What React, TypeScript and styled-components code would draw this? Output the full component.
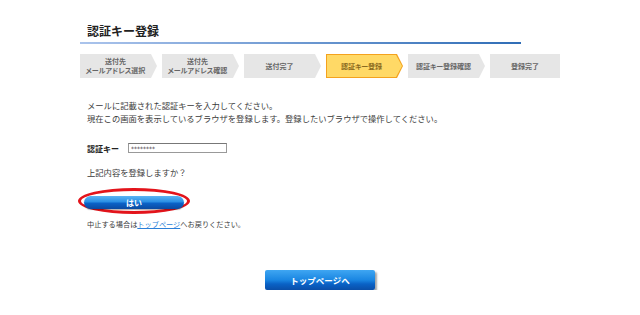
import React from "react";
import styled, { createGlobalStyle } from "styled-components";

const GlobalStyle = createGlobalStyle`
  html, body {
    margin: 0;
    padding: 0;
    background: #fff;
  }
  body {
    font-family: "Noto Sans CJK JP", "Noto Sans", sans-serif;
    color: #333;
  }
`;

const Page = styled.div`
  width: 480px;
  margin: 0 auto;
  padding-top: 23px;
`;

const Title = styled.h1`
  margin: 0;
  width: 434px;
  padding: 0 0 3px 7px;
  font-size: 12px;
  line-height: 16px;
  font-weight: bold;
  color: #222;
  border-bottom: 2px solid #3b78c0;
  border-image: linear-gradient(to right, #abc4ec, #2f6db6) 1;
`;

const Steps = styled.ol`
  display: flex;
  gap: 5px;
  margin: 10px 0 0;
  padding: 0;
  list-style: none;
`;

const arrow = `polygon(0 0, calc(100% - 6px) 0, 100% 50%, calc(100% - 6px) 100%, 0 100%)`;

const Step = styled.li<{ $active?: boolean; $last?: boolean }>`
  width: ${(p) => (p.$last ? 70 : 77)}px;
  height: 24px;
  padding: 1px;
  box-sizing: border-box;
  background: ${(p) => (p.$active ? "#f4a21e" : "#e6e6e6")};
  clip-path: ${(p) => (p.$last ? "none" : arrow)};
`;

const StepFace = styled.div<{ $active?: boolean; $last?: boolean }>`
  height: 100%;
  display: flex;
  flex-direction: column;
  align-items: center;
  justify-content: center;
  padding-right: ${(p) => (p.$last ? 0 : 6)}px;
  box-sizing: border-box;
  background: ${(p) => (p.$active ? "#ffd966" : "#e6e6e6")};
  clip-path: ${(p) => (p.$last ? "none" : arrow)};
  color: ${(p) => (p.$active ? "#8a6a20" : "#666")};
  font-size: 7px;
  line-height: 9px;
  font-weight: bold;
  font-feature-settings: "palt";
  text-align: center;
  white-space: nowrap;
`;

const Text = styled.p<{ $gap: number; $size?: number }>`
  margin: ${(p) => p.$gap}px 0 0;
  padding-left: 7px;
  font-size: ${(p) => p.$size ?? 8.3}px;
  line-height: 13px;
  color: #3a3a3a;
`;

const KeyRow = styled.div`
  display: flex;
  align-items: center;
  gap: 9px;
  margin-top: 17px;
  padding-left: 7px;
  height: 12px;
`;

const KeyLabel = styled.label`
  font-size: 8px;
  font-weight: bold;
  color: #222;
`;

const KeyInput = styled.input`
  width: 99px;
  height: 10px;
  box-sizing: border-box;
  padding: 0 2px;
  border: 1px solid #999;
  border-top-color: #777;
  font-size: 6px;
  line-height: 6px;
  font-family: "DejaVu Sans", sans-serif;
  color: #333;
  outline: none;
  vertical-align: top;
`;

const Circled = styled.div`
  margin: 9px 0 0 -2px;
  width: 112px;
  height: 26px;
  box-sizing: border-box;
  border: 3px solid #e3141b;
  border-radius: 50%;
  display: flex;
  align-items: center;
  justify-content: center;
`;

const blueFace = `
  background: linear-gradient(to bottom, #5bb4f4 0%, #2a8fe4 45%, #0b63c8 55%, #0a49a0 100%);
  color: #fff;
  font-family: "Noto Sans CJK JP", sans-serif;
  font-weight: bold;
  border: none;
  padding: 0;
  cursor: pointer;
`;

const YesButton = styled.button`
  ${blueFace}
  width: 100px;
  height: 13px;
  margin-top: 2px;
  border-radius: 7px;
  font-size: 8px;
  line-height: 13px;
  box-shadow: 0 1px 1px rgba(0, 0, 0, 0.3);
`;

const Link = styled.a`
  color: #2a7fd8;
  text-decoration: underline;
`;

const TopButton = styled.button`
  ${blueFace}
  display: block;
  width: 110px;
  height: 20px;
  margin: 39px auto 0;
  border-radius: 2px;
  font-size: 8.5px;
  box-shadow: 2px 2px 2px rgba(0, 0, 0, 0.35);
  background: linear-gradient(to bottom, #3fa6f2 0%, #1a86e2 50%, #0a62c6 70%, #0a4ea8 100%);
`;

const steps = [
  ["送付先", "メールアドレス選択"],
  ["送付先", "メールアドレス確認"],
  ["送付完了"],
  ["認証キー登録"],
  ["認証キー登録確認"],
  ["登録完了"],
];

export default function App() {
  return (
    <>
      <GlobalStyle />
      <Page>
        <Title>認証キー登録</Title>
        <Steps>
          {steps.map((lines, i) => (
            <Step key={i} $active={i === 3} $last={i === steps.length - 1}>
              <StepFace $active={i === 3} $last={i === steps.length - 1}>
                {lines.map((l) => (
                  <span key={l}>{l}</span>
                ))}
              </StepFace>
            </Step>
          ))}
        </Steps>
        <Text $gap={21}>
          メールに記載された認証キーを入力してください。
          <br />
          現在この画面を表示しているブラウザを登録します。登録したいブラウザで操作してください。
        </Text>
        <KeyRow>
          <KeyLabel htmlFor="key">認証キー</KeyLabel>
          <KeyInput id="key" type="text" readOnly value="********" />
        </KeyRow>
        <Text $gap={12}>上記内容を登録しますか？</Text>
        <Circled>
          <YesButton>はい</YesButton>
        </Circled>
        <Text $gap={4} $size={7.2}>
          中止する場合は<Link href="#">トップページ</Link>へお戻りください。
        </Text>
        <TopButton>トップページへ</TopButton>
      </Page>
    </>
  );
}
